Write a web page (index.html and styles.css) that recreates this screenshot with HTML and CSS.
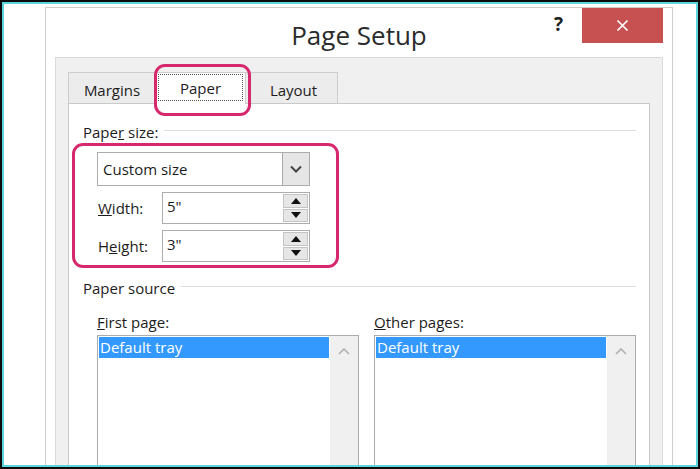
FILE: index.html
```html
<!DOCTYPE html>
<html lang="en">
<head>
    <meta charset="UTF-8">
    <title>Page Setup</title>
    <link rel="stylesheet" href="styles.css">
</head>
<body>
    <div class="frame">
        <div class="dialog">
            <div class="titlebar">
                <div class="title">Page Setup</div>
                <div class="controls">
                    <div class="help">?</div>
                    <div class="close">
                        <svg width="13" height="13" viewBox="0 0 13 13"><path d="M1.5 1.5 L11.5 11.5 M11.5 1.5 L1.5 11.5" stroke="#fff" stroke-width="1.7" fill="none"/></svg>
                    </div>
                </div>
            </div>
            <div class="tab-area">
                <div class="tabs">
                    <div class="tab tab-margins">Margins</div>
                    <div class="tab tab-paper active">
                        <span class="focus">Paper</span>
                        <div class="mark"></div>
                    </div>
                    <div class="tab tab-layout">Layout</div>
                </div>
                <div class="panel">
                    <div class="group-head"><span>Pape<u>r</u> size:</span><div class="rule"></div></div>
                    <div class="size-box">
                        <div class="combo">
                            <span class="combo-text">Custom size</span>
                            <div class="drop">
                                <svg width="12" height="8" viewBox="0 0 12 8"><path d="M1 1.5 L6 6.5 L11 1.5" stroke="#444" stroke-width="2" fill="none"/></svg>
                            </div>
                        </div>
                        <div class="field-row">
                            <label><u>W</u>idth:</label>
                            <div class="spin">
                                <span class="spin-val">5"</span>
                                <div class="spin-btns">
                                    <div class="spin-btn"><svg width="10" height="6" viewBox="0 0 10 6"><path d="M0 6 L5 0 L10 6 Z" fill="#111"/></svg></div>
                                    <div class="spin-btn"><svg width="10" height="6" viewBox="0 0 10 6"><path d="M0 0 L5 6 L10 0 Z" fill="#111"/></svg></div>
                                </div>
                            </div>
                        </div>
                        <div class="field-row">
                            <label>H<u>e</u>ight:</label>
                            <div class="spin">
                                <span class="spin-val">3"</span>
                                <div class="spin-btns">
                                    <div class="spin-btn"><svg width="10" height="6" viewBox="0 0 10 6"><path d="M0 6 L5 0 L10 6 Z" fill="#111"/></svg></div>
                                    <div class="spin-btn"><svg width="10" height="6" viewBox="0 0 10 6"><path d="M0 0 L5 6 L10 0 Z" fill="#111"/></svg></div>
                                </div>
                            </div>
                        </div>
                    </div>
                    <div class="group-head source-head"><span>Paper source</span><div class="rule"></div></div>
                    <div class="sources">
                        <div class="source">
                            <div class="src-label"><u>F</u>irst page:</div>
                            <div class="listbox">
                                <div class="items"><div class="item selected">Default tray</div></div>
                                <div class="scroll">
                                    <svg width="12" height="7" viewBox="0 0 12 7"><path d="M1 6 L6 1 L11 6" stroke="#b0b0b0" stroke-width="1.6" fill="none"/></svg>
                                </div>
                            </div>
                        </div>
                        <div class="source">
                            <div class="src-label"><u>O</u>ther pages:</div>
                            <div class="listbox">
                                <div class="items"><div class="item selected">Default tray</div></div>
                                <div class="scroll">
                                    <svg width="12" height="7" viewBox="0 0 12 7"><path d="M1 6 L6 1 L11 6" stroke="#b0b0b0" stroke-width="1.6" fill="none"/></svg>
                                </div>
                            </div>
                        </div>
                    </div>
                </div>
            </div>
        </div>
    </div>
</body>
</html>
```

FILE: styles.css
```css
* {
    box-sizing: border-box;
}
body {
    margin: 0;
    background: #0c0c0c;
    font-family: "Open Sans", "Noto Sans", sans-serif;
    font-size: 15px;
    color: #1c1c1c;
}
.frame {
    margin: 2px;
    height: 465px;
    border: 2px solid #5cd6dc;
    background: #fff;
    overflow: hidden;
    padding: 3px 0 0 41px;
}
.dialog {
    width: 628px;
    height: 480px;
    border: 1px solid #cfcfcf;
    display: flex;
    flex-direction: column;
}
.titlebar {
    display: grid;
    grid-template-columns: 1fr auto 1fr;
    height: 49px;
    flex-shrink: 0;
}
.title {
    grid-column: 2;
    font-size: 26px;
    line-height: 30px;
    margin-top: 12px;
    color: #2b2b2b;
}
.controls {
    grid-column: 3;
    display: flex;
    justify-content: flex-end;
    align-items: flex-start;
    padding-right: 9px;
}
.help {
    font-weight: bold;
    font-size: 19px;
    line-height: 20px;
    margin-top: 6px;
    margin-right: 19px;
    color: #222;
}
.close {
    width: 81px;
    height: 35px;
    background: #c75050;
    display: flex;
    align-items: center;
    justify-content: center;
}
.tab-area {
    flex: 1;
    margin: 0 9px;
    background: #f0f0f0;
    border: 1px solid #dadada;
    border-bottom: none;
    padding: 14px 12px 0 12px;
    display: flex;
    flex-direction: column;
}
.tabs {
    display: flex;
    height: 31px;
    flex-shrink: 0;
}
.tab {
    border: 1px solid #cdcdcd;
    border-bottom: none;
    background: #ececec;
    display: flex;
    align-items: center;
    justify-content: center;
    line-height: 20px;
    padding-top: 4px;
}
.tab + .tab {
    border-left: none;
}
.tab-margins {
    width: 88px;
}
.tab-paper {
    width: 90px;
}
.tab-layout {
    width: 92px;
    padding-left: 4px;
}
.tab.active {
    background: #fff;
    position: relative;
    margin-bottom: -1px;
    height: 32px;
    padding: 1px 2px 3px;
}
.focus {
    flex: 1;
    align-self: stretch;
    border: 1px dotted #555;
    display: flex;
    align-items: center;
    justify-content: center;
}
.mark {
    position: absolute;
    left: -2px;
    right: -6px;
    top: -9px;
    bottom: -12px;
    border: 3px solid #d6286c;
    border-radius: 11px;
}
.panel {
    flex: 1;
    background: #fff;
    border: 1px solid #c9c9c9;
    padding: 18px 13px 0 14px;
}
.group-head {
    display: flex;
    align-items: center;
    line-height: 20px;
}
.rule {
    flex: 1;
    height: 1px;
    background: #dedede;
    margin: -3px 0 0 6px;
}
.size-box {
    width: 267px;
    margin: 1px 0 0 -11px;
    border: 3px solid #d6286c;
    border-radius: 11px;
    padding: 6px 26px 3px 22px;
}
.combo {
    height: 34px;
    border: 1px solid #acacac;
    display: flex;
    align-items: center;
}
.combo-text {
    flex: 1;
    padding-left: 5px;
}
.drop {
    width: 27px;
    align-self: stretch;
    background: #e6e6e6;
    border-left: 1px solid #acacac;
    display: flex;
    align-items: center;
    justify-content: center;
}
.field-row {
    display: flex;
    align-items: center;
    margin-top: 6px;
}
.field-row label {
    width: 65px;
    padding-left: 1px;
}
.spin {
    flex: 1;
    height: 32px;
    border: 1px solid #acacac;
    display: flex;
    align-items: flex-start;
}
.spin-val {
    flex: 1;
    padding: 3px 0 0 4px;
}
.spin-btns {
    width: 27px;
    align-self: stretch;
    display: flex;
    flex-direction: column;
    gap: 1px;
    padding: 1px;
}
.spin-btn {
    flex: 1;
    background: #e6e6e6;
    border: 1px solid #c4c4c4;
    display: flex;
    align-items: center;
    justify-content: center;
}
.source-head {
    margin-top: 10px;
}
.sources {
    display: grid;
    grid-template-columns: 1fr 1fr;
    gap: 15px;
    padding-left: 14px;
    margin-top: 14px;
}
.src-label {
    line-height: 20px;
    margin-bottom: 3px;
}
.listbox {
    height: 140px;
    border: 1px solid #acacac;
    display: flex;
}
.items {
    flex: 1;
    padding: 1px;
}
.item {
    height: 21px;
    line-height: 21px;
    padding-left: 1px;
}
.item.selected {
    background: #3399ff;
    color: #fff;
}
.scroll {
    width: 28px;
    background: #f0f0f0;
    display: flex;
    justify-content: center;
    align-items: flex-start;
    padding-top: 12px;
}
```
